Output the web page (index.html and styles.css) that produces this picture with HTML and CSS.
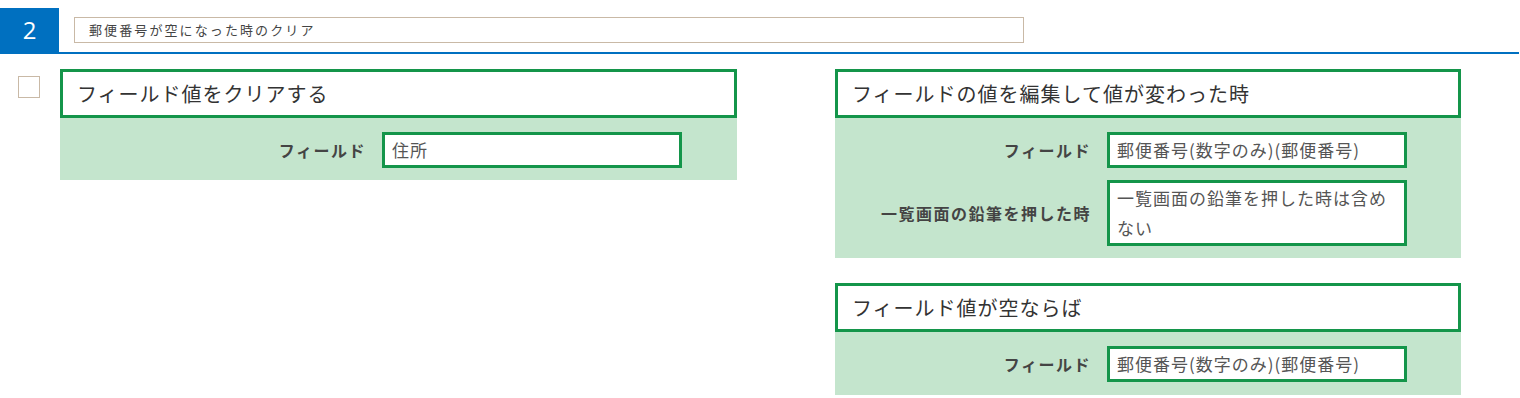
FILE: index.html
```html
<!DOCTYPE html>
<html lang="ja">
<head>
    <meta charset="UTF-8">
    <meta name="viewport" content="width=device-width, initial-scale=1.0">
    <title>条件ルール</title>
    <link rel="stylesheet" href="styles.css">
</head>
<body>
    <div class="title-bar">
        <div class="rule-number">2</div>
        <div class="rule-name">郵便番号が空になった時のクリア</div>
    </div>

    <div class="rule-body">
        <div class="check-box"></div>

        <div class="action-col">
            <div class="card">
                <div class="card-header">フィールド値をクリアする</div>
                <div class="card-content left-grid">
                    <div class="field-label">フィールド</div>
                    <div class="field-value">住所</div>
                </div>
            </div>
        </div>

        <div class="trigger-col">
            <div class="card">
                <div class="card-header">フィールドの値を編集して値が変わった時</div>
                <div class="card-content right-grid">
                    <div class="field-label">フィールド</div>
                    <div class="field-value">郵便番号(数字のみ)(郵便番号)</div>
                    <div class="field-label">一覧画面の鉛筆を押した時</div>
                    <div class="field-value multi">一覧画面の鉛筆を押した時は含めない</div>
                </div>
            </div>

            <div class="card">
                <div class="card-header">フィールド値が空ならば</div>
                <div class="card-content right-grid last">
                    <div class="field-label">フィールド</div>
                    <div class="field-value">郵便番号(数字のみ)(郵便番号)</div>
                </div>
            </div>
        </div>
    </div>
</body>
</html>
```

FILE: styles.css
```css
:root {
    --blue: #0070c0;
    --green: #14954a;
    --green-bg: #c4e5cd;
    --tan: #c9b9a6;
    --text: #333;
}

body {
    margin: 0;
    font-family: "Noto Sans CJK JP", "Noto Sans", sans-serif;
    color: var(--text);
    background: #fff;
}

.title-bar {
    display: flex;
    align-items: flex-start;
    padding-top: 8px;
    border-bottom: 2px solid var(--blue);
    width: 1519px;
}

.rule-number {
    width: 59px;
    height: 44px;
    background: var(--blue);
    color: #fff;
    font-family: "Open Sans", "Noto Sans", sans-serif;
    font-size: 24px;
    line-height: 44px;
    text-align: center;
}

.rule-name {
    margin: 9px 0 0 15px;
    width: 934px;
    height: 24px;
    border: 1px solid var(--tan);
    padding-left: 14px;
    font-size: 13px;
    letter-spacing: 2.1px;
    line-height: 24px;
    color: #444;
}

.rule-body {
    display: flex;
    align-items: flex-start;
    padding-top: 15px;
}

.check-box {
    width: 20px;
    height: 20px;
    border: 1px solid var(--tan);
    margin: 7px 0 0 18px;
}

.action-col {
    width: 677px;
    margin-left: 20px;
}

.trigger-col {
    width: 626px;
    margin-left: 98px;
    display: flex;
    flex-direction: column;
    gap: 25px;
}

.card-header {
    height: 43px;
    border: 3px solid var(--green);
    background: #fff;
    padding-left: 14px;
    font-size: 20px;
    letter-spacing: 1px;
    line-height: 43px;
}

.card-content {
    background: var(--green-bg);
    padding: 14px 0 12px;
    display: grid;
    row-gap: 12px;
    column-gap: 16px;
    align-items: center;
}

.left-grid {
    grid-template-columns: 306px 300px;
}

.right-grid {
    grid-template-columns: 256px 300px;
}

.right-grid.last {
    padding-bottom: 13px;
}

.field-label {
    text-align: right;
    font-weight: bold;
    font-size: 16px;
    letter-spacing: 1.5px;
    color: #444;
}

.field-value {
    border: 3px solid var(--green);
    background: #fff;
    padding: 0 7px;
    height: 30px;
    font-size: 17px;
    letter-spacing: 1px;
    line-height: 30px;
    color: #555;
}

.field-value.multi {
    height: auto;
    line-height: 30px;
}
```
